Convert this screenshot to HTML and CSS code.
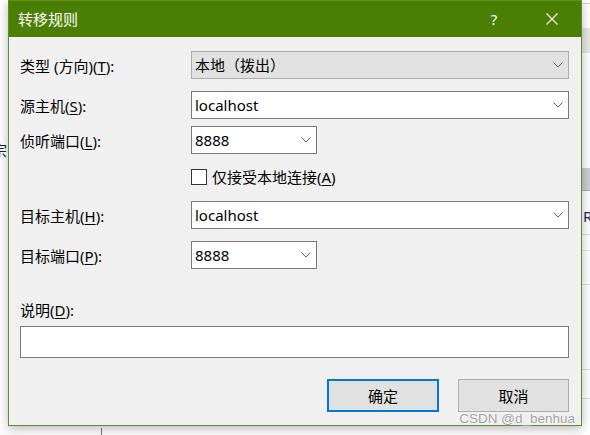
FILE: index.html
```html
<!DOCTYPE html>
<html lang="zh-CN">

<head>
    <meta charset="UTF-8">
    <title>转移规则</title>
    <link rel="stylesheet" href="styles.css">
</head>

<body>
    <!-- windows behind the dialog -->
    <div class="behind behind_left"><span>宗</span></div>
    <div class="behind behind_right"><span>R)</span></div>
    <div class="behind behind_bottom"></div>

    <div class="dialog">
        <div class="titlebar">
            <span class="title">转移规则</span>
            <span class="title_btn">?</span>
            <span class="title_btn">
                <svg width="12" height="12" viewBox="0 0 12 12">
                    <path d="M0.5 0.5 L11.5 11.5 M11.5 0.5 L0.5 11.5" stroke="#fff" stroke-width="1.1" fill="none" />
                </svg>
            </span>
        </div>

        <div class="content">
            <div class="row row_type">
                <label class="label">类型 (方向)(<u>T</u>):</label>
                <div class="combo combo_wide combo_disabled">
                    <span>本地（拨出）</span>
                    <svg class="chevron" width="10" height="6" viewBox="0 0 10 6">
                        <path d="M0.5 0.5 L5 5 L9.5 0.5" stroke="#606060" stroke-width="1" fill="none" />
                    </svg>
                </div>
            </div>
            <div class="row row_src">
                <label class="label">源主机(<u>S</u>):</label>
                <div class="combo combo_wide">
                    <span>localhost</span>
                    <svg class="chevron" width="10" height="6" viewBox="0 0 10 6">
                        <path d="M0.5 0.5 L5 5 L9.5 0.5" stroke="#606060" stroke-width="1" fill="none" />
                    </svg>
                </div>
            </div>
            <div class="row row_listen">
                <label class="label">侦听端口(<u>L</u>):</label>
                <div class="combo combo_port">
                    <span>8888</span>
                    <svg class="chevron" width="10" height="6" viewBox="0 0 10 6">
                        <path d="M0.5 0.5 L5 5 L9.5 0.5" stroke="#606060" stroke-width="1" fill="none" />
                    </svg>
                </div>
            </div>
            <div class="check_row">
                <span class="checkbox"></span>
                <span>仅接受本地连接(<u>A</u>)</span>
            </div>
            <div class="row row_dst">
                <label class="label">目标主机(<u>H</u>):</label>
                <div class="combo combo_wide">
                    <span>localhost</span>
                    <svg class="chevron" width="10" height="6" viewBox="0 0 10 6">
                        <path d="M0.5 0.5 L5 5 L9.5 0.5" stroke="#606060" stroke-width="1" fill="none" />
                    </svg>
                </div>
            </div>
            <div class="row row_dport">
                <label class="label">目标端口(<u>P</u>):</label>
                <div class="combo combo_port">
                    <span>8888</span>
                    <svg class="chevron" width="10" height="6" viewBox="0 0 10 6">
                        <path d="M0.5 0.5 L5 5 L9.5 0.5" stroke="#606060" stroke-width="1" fill="none" />
                    </svg>
                </div>
            </div>
            <div class="desc_label">说明(<u>D</u>):</div>
            <div class="textbox"></div>
            <div class="buttons">
                <div class="btn btn_default">确定</div>
                <div class="btn">取消</div>
            </div>
        </div>
    </div>

    <div class="watermark">CSDN @d_benhua</div>
</body>

</html>
```

FILE: styles.css
```css
* {
    box-sizing: border-box;
    font-family: "Noto Sans", "Noto Sans CJK SC", sans-serif;
}

body {
    margin: 0;
    width: 590px;
    height: 435px;
    overflow: hidden;
    position: relative;
    background-color: #fbfbfb;
    font-size: 15px;
    line-height: 20px;
    color: #000;
}

u {
    text-underline-offset: 2px;
}

/* pieces of other windows */
.behind {
    position: absolute;
}

.behind_left {
    left: 0;
    top: 0;
    width: 8px;
    height: 426px;
    overflow: hidden;
    background-color: #fff;
}

.behind_left>span {
    position: absolute;
    left: -8px;
    top: 140px;
    color: #222;
}

.behind_right {
    left: 582px;
    top: 0;
    width: 8px;
    height: 435px;
    overflow: hidden;
    background:
        linear-gradient(#d0d0d0, #d0d0d0) 0 3px / 100% 1px no-repeat,
        linear-gradient(#e6e6e6, #e6e6e6) 0 28px / 100% 25px no-repeat,
        linear-gradient(#cccccc, #cccccc) 0 168px / 100% 22px no-repeat,
        linear-gradient(#a8a8a8, #a8a8a8) 0 190px / 100% 1px no-repeat,
        linear-gradient(#dcdcdc, #dcdcdc) 0 234px / 100% 1px no-repeat,
        linear-gradient(#e4e4e4, #e4e4e4) 0 250px / 100% 1px no-repeat,
        linear-gradient(#dcdcdc, #dcdcdc) 0 284px / 100% 1px no-repeat,
        linear-gradient(#dcdcdc, #dcdcdc) 0 369px / 100% 1px no-repeat,
        linear-gradient(#dcdcdc, #dcdcdc) 0 398px / 100% 1px no-repeat,
        #fff;
}

.behind_right>span {
    position: absolute;
    left: 1px;
    top: 206px;
    color: #1a2a6a;
}

.behind_bottom {
    left: 101px;
    top: 428px;
    width: 1px;
    height: 7px;
    background-color: #777;
}

/* dialog */
.dialog {
    position: relative;
    margin-left: 8px;
    width: 574px;
    border: 1px solid #5f8c2c;
    border-top-color: #5d9020;
    background-color: #f0f0f0;
    box-shadow: 0 2px 10px rgba(0, 0, 0, 0.28);
}

.titlebar {
    display: flex;
    align-items: center;
    height: 36px;
    padding-left: 9px;
    background-color: #4a7f03;
    color: #fff;
}

.title {
    flex: 1;
    margin-top: -1px;
}

.title_btn {
    display: flex;
    justify-content: center;
    align-items: center;
    width: 58px;
    height: 36px;
    margin-top: -1px;
}

.content {
    padding: 14px 12px 13px 11px;
}

.row {
    display: flex;
    align-items: center;
    height: 28px;
}

.row_src,
.row_dport {
    margin-top: 12px;
}

.row_listen {
    margin-top: 7px;
}

.row_dst {
    margin-top: 16px;
}

.label {
    width: 171px;
    padding-top: 1px;
}

.combo {
    display: flex;
    align-items: center;
    justify-content: space-between;
    height: 28px;
    padding: 0 5px 0 3px;
    border: 1px solid #7a7a7a;
    background-color: #fff;
}

.combo_wide {
    width: 378px;
}

.combo_port {
    width: 126px;
}

.combo_disabled {
    border-color: #adadad;
    background-color: #e1e1e1;
}

.chevron {
    display: block;
}

.check_row {
    display: flex;
    align-items: center;
    gap: 5px;
    height: 16px;
    margin-top: 15px;
    padding-left: 171px;
}

.checkbox {
    width: 16px;
    height: 16px;
    border: 1px solid #333;
    background-color: #fff;
}

.desc_label {
    margin-top: 31px;
}

.textbox {
    height: 32px;
    margin-top: 6px;
    border: 1px solid #7a7a7a;
    background-color: #fff;
}

.buttons {
    display: flex;
    justify-content: flex-end;
    gap: 19px;
    margin-top: 21px;
}

.btn {
    display: flex;
    justify-content: center;
    align-items: center;
    width: 111px;
    height: 33px;
    border: 1px solid #adadad;
    background-color: #e1e1e1;
}

.btn_default {
    width: 112px;
    border: 2px solid #0078d7;
}

.watermark {
    position: absolute;
    right: 15px;
    top: 409px;
    white-space: nowrap;
    font-family: "Liberation Sans", sans-serif;
    font-size: 13.5px;
    color: rgba(130, 130, 130, 0.75);
    text-shadow: 0 0 1px #fff;
}
```
